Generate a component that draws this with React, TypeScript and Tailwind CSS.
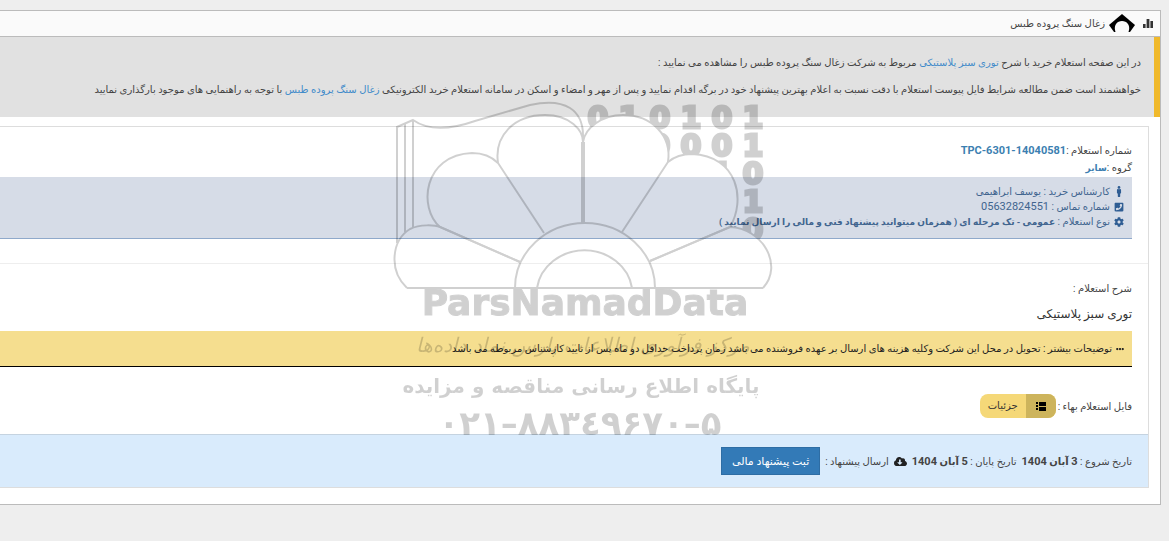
import type { ReactNode } from 'react';
import { FaCloudDownloadAlt, FaCog, FaEllipsisH, FaMale, FaPhoneSquare } from 'react-icons/fa';

// ─── Watermark ────────────────────────────────────────────────────────────────

const digitRows = ['010101', '0001', '10', '1', '0'];

const petals = [
  'M164 143 L118 73 C114 46 134 25 165 25 C190 25 203 40 203 52 V133',
  'M203 133 V52 C205 38 222 25 243 25 C272 25 292 46 288 72 L242 142',
  'M140 172 L60 137 C38 118 43 65 92 63 C103 63 112 67 118 73',
  'M270 171 L350 137 C366 110 358 66 312 64 C303 64 294 67 288 72',
  'M27 198 C8 180 12 150 30 139 C40 134 55 135 60 137 L140 172',
  'M383 198 C404 175 382 138 350 137 L270 171',
];

function Watermark() {
  return (
    <svg
      className="pointer-events-none absolute left-[380px] top-[90px] w-[400px] h-[360px]"
      viewBox="0 0 400 360"
      aria-hidden="true"
    >
      <mask id="behind-petals">
        <rect width="400" height="360" fill="white" />
        {petals.map(d => (
          <path key={d} d={d} fill="black" />
        ))}
      </mask>
      <g opacity="0.18">
        <g mask="url(#behind-petals)" fontFamily="DejaVu Sans" fontWeight="700" fontSize="30" textAnchor="middle" stroke="black" strokeWidth="3">
          {digitRows.map((row, r) =>
            row.split('').map((digit, i) => (
              <text key={`${r}-${i}`} x={373 - (row.length - 1 - i) * 31} y={38 + r * 28}>
                {digit}
              </text>
            ))
          )}
        </g>
        <g fill="none" stroke="black" strokeWidth="2">
          {petals.map(d => (
            <path key={d} d={d} />
          ))}
          <path d="M203 133 V52" strokeWidth="4" />
          <path d="M17 153 V37 L33 30 C50 42 75 38 95 31 L150 15 C185 7 204 20 203 48 M25 142 V34 M33 138 V30" />
          <path d="M27 198 H383" />
          <path d="M135 198 A70 65 0 0 1 275 198" />
          <path d="M157 198 A48 44 0 0 1 252 198" />
        </g>
        <g fontFamily="DejaVu Sans" textAnchor="middle">
          <text x="205" y="225" fontSize="36" fontWeight="700" stroke="black" strokeWidth="1">ParsNamadData</text>
          <text x="203" y="262" fontSize="20" fontStyle="italic" direction="rtl">مرکز فرآوری اطلاعات پارس نماد داده‌ها</text>
          <text x="201" y="303" fontSize="20" fontWeight="700" direction="rtl">پایگاه اطلاع رسانی مناقصه و مزایده</text>
          <text x="200" y="345" fontSize="34" fontWeight="700" direction="ltr">۰۲۱–۸۸۳٤۹۶۷۰–۵</text>
        </g>
      </g>
    </svg>
  );
}

// ─── Icons ────────────────────────────────────────────────────────────────────

function StatsIcon() {
  return (
    <svg className="w-[10px] h-[10px]" viewBox="0 0 10 10" fill="#333">
      <path d="M0 5h2.6v4H0zM3.6 0h2.8v9H3.6zM7.4 2H10v7H7.4z" />
    </svg>
  );
}

function CompanyLogo() {
  return (
    <svg className="w-[26px] h-[20px]" viewBox="0 0 26 20">
      <path d="M13 0 L26 11 L21 18 H5 L0 11 Z" fill="#000" />
      <path d="M13 7 C18 7 21 11 20 16 L19 20 H7 L6 16 C5 11 8 7 13 7Z" fill="#fafafa" />
    </svg>
  );
}

function ListIcon() {
  return (
    <svg className="w-[10px] h-[9px]" viewBox="0 0 10 9" fill="#000">
      <path d="M0 0h2v2H0zM0 3h2v2H0zM0 6h2v2H0zM3 0h7v4H3zM3 5h7v4H3z" />
    </svg>
  );
}

// ─── Page ─────────────────────────────────────────────────────────────────────

function InfoLine({ icon, children }: { icon: ReactNode; children: ReactNode }) {
  return (
    <p className="flex items-center gap-1 h-[15px]">
      <span className="w-[10px] flex justify-center text-[#2f5d93]">{icon}</span>
      <span>{children}</span>
    </p>
  );
}

function App() {
  return (
    <div
      dir="rtl"
      lang="fa"
      className="relative min-h-screen bg-[#eee] pt-[10px] pr-2 text-[10px] leading-[17px] text-[#444] font-[Roboto,'DejaVu_Sans',sans-serif]"
    >
      <main className="bg-white border-y border-r border-[#bbb] pb-4">
        <header className="flex items-center gap-1 h-[26px] pr-[7px] bg-[#fafafa] border-b border-[#bbb]">
          <StatsIcon />
          <span className="pr-1"><CompanyLogo /></span>
          <h1>زغال سنگ پروده طبس</h1>
        </header>

        <section className="h-20 pt-3 pr-[13px] bg-[#e1e1e1] border-r-[6px] border-[#f0b92b] leading-[27px]">
          <p>
            در این صفحه استعلام خرید با شرح <a href="#item" className="text-[#428bca]">توری سبز پلاستیکی</a> مربوط به شرکت زغال سنگ پروده طبس را مشاهده می نمایید :
          </p>
          <p>
            خواهشمند است ضمن مطالعه شرایط فایل پیوست استعلام با دقت نسبت به اعلام بهترین پیشنهاد خود در برگه اقدام نمایید و پس از مهر و امضاء و اسکن در سامانه استعلام خرید الکترونیکی <a href="#company" className="text-[#428bca]">زغال سنگ پروده طبس</a> با توجه به راهنمایی های موجود بارگذاری نمایید
          </p>
        </section>

        <article className="mt-[9px] mr-[11px] border-y border-r border-[#ddd]">
          <section className="pt-[15px] pr-4 pb-6 border-b border-[#eee]">
            <p>شماره استعلام :<b className="text-[11px] text-[#3c7fb1]">TPC-6301-14040581</b></p>
            <p>گروه :<b className="text-[9px] text-[#3c7fb1]">سایر</b></p>
            <div className="h-[62px] pt-[7px] pr-2 bg-[#d6dce7] border-b border-[#8fa9cb] text-[#41658f]">
              <InfoLine icon={<FaMale size={11} />}>کارشناس خرید : یوسف ابراهیمی</InfoLine>
              <InfoLine icon={<FaPhoneSquare size={10} />}>شماره تماس : <span className="text-[11px]">05632824551</span></InfoLine>
              <InfoLine icon={<FaCog size={10} />}>نوع استعلام : <b className="text-[9px]">عمومی - تک مرحله ای ( همزمان میتوانید پیشنهاد فنی و مالی را ارسال نمایید )</b></InfoLine>
            </div>
          </section>

          <section className="pt-4 pr-4">
            <p>شرح استعلام :</p>
            <h2 className="mt-2 text-xs leading-[18px] text-[#333]">توری سبز پلاستیکی</h2>
            <p className="flex items-center gap-1 mt-2 pr-2 h-9 bg-[#f5de8f] border-b border-black text-[#222]">
              <FaEllipsisH size={8} />
              <span>توضیحات بیشتر : تحویل در محل این شرکت وکلیه هزینه های ارسال بر عهده فروشنده می باشد زمان پرداخت حداقل دو ماه پس از تایید کارشناس مربوطه می باشد</span>
            </p>
            <div className="flex items-center gap-[2px] mt-[27px] mb-4">
              <span>فایل استعلام بهاء :</span>
              <button className="flex h-6 rounded-lg overflow-hidden bg-[#f5d878] text-[#333]">
                <span className="flex items-center justify-center w-[30px] h-6 bg-[#cdb45c]"><ListIcon /></span>
                <span className="px-2 leading-6">جزئیات</span>
              </button>
            </div>
          </section>

          <footer className="flex items-center gap-[5px] h-[53px] pr-4 bg-[#d9ebfc] border-t border-[#c5d3e0]">
            <span>تاریخ شروع : <b><span className="text-[11px]">3</span> آبان <span className="text-[11px]">1404</span></b></span>
            <span>تاریخ پایان : <b><span className="text-[11px]">5</span> آبان <span className="text-[11px]">1404</span></b></span>
            <FaCloudDownloadAlt size={13} className="text-[#222]" />
            <span>ارسال پیشنهاد :</span>
            <button className="h-7 px-[10px] bg-[#337ab7] border border-[#2e6da4] text-white text-[11px]">ثبت پیشنهاد مالی</button>
          </footer>
        </article>
      </main>
      <Watermark />
    </div>
  );
}

export default App;
